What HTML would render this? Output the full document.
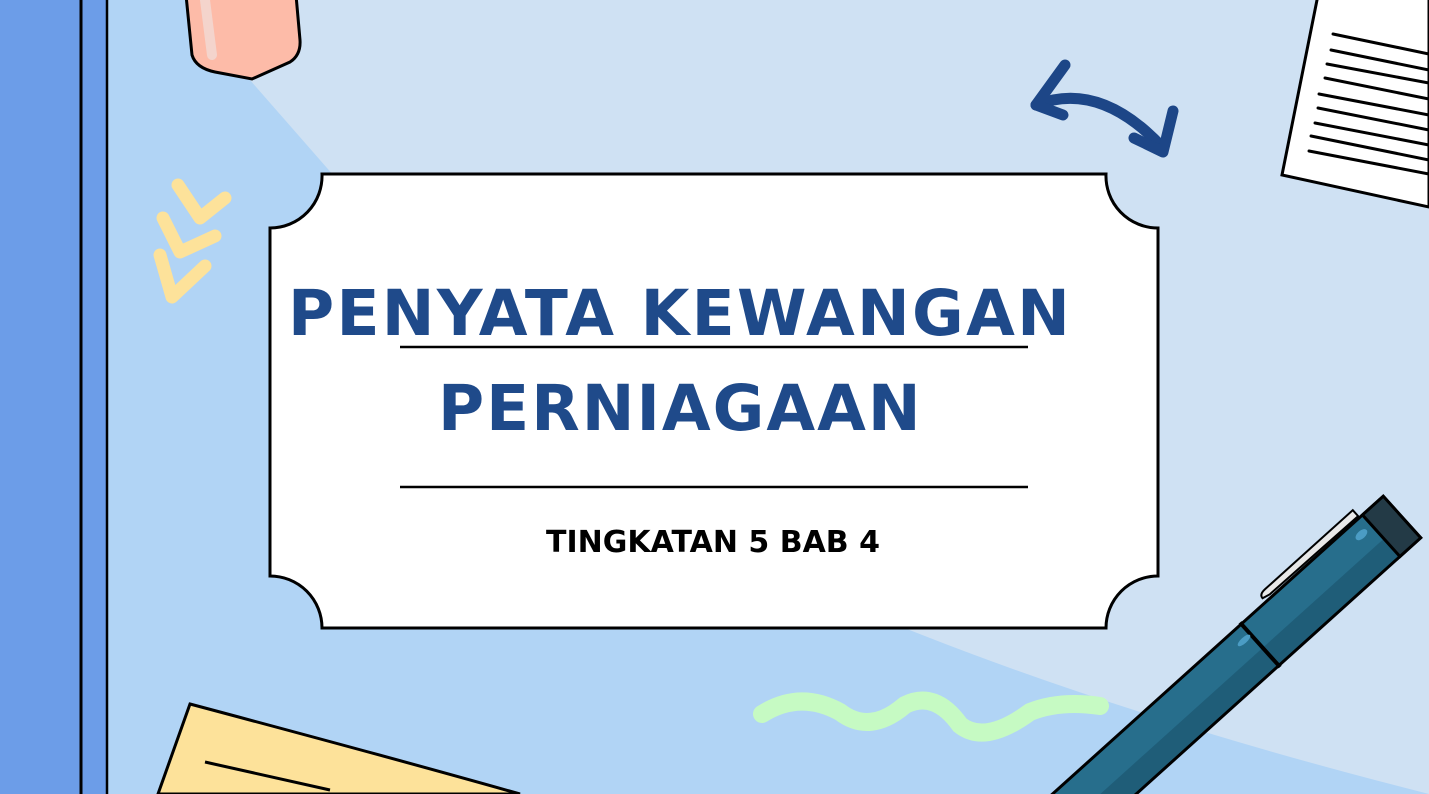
<!DOCTYPE html>
<html><head><meta charset="utf-8"><style>
html,body{margin:0;padding:0;width:1429px;height:794px;overflow:hidden;background:#B1D4F5;position:relative}
svg{position:absolute;left:0;top:0}
.t{position:absolute;font-family:"DejaVu Sans","Liberation Sans",sans-serif;font-weight:bold;color:#1F4A8A;white-space:nowrap;line-height:1}
</style></head><body>
<svg width="1429" height="794" viewBox="0 0 1429 794">
<path d="M250,0 L250,80 L600,480 Q900,660 1429,794 L1429,0 Z" fill="#CFE1F3"/>
<rect x="0" y="0" width="106" height="794" fill="#6C9DE8"/>
<line x1="81" y1="0" x2="81" y2="794" stroke="#000" stroke-width="3"/>
<line x1="107" y1="0" x2="107" y2="794" stroke="#000" stroke-width="2.5"/>
<path d="M186,-5 L192,55 Q196,68 215,72 L252,79 L290,62 Q301,55 300,40 L296,-5 Z" fill="#FDBBA8" stroke="#000" stroke-width="3"/>
<line x1="205" y1="0" x2="212" y2="55" stroke="#F4D4CC" stroke-width="10" stroke-linecap="round"/>
<g fill="none" stroke="#FDE29A" stroke-width="13" stroke-linecap="round" stroke-linejoin="round">
<path d="M178,185 L200,218 L225,198"/>
<path d="M163,218 L180,252 L215,236"/>
<path d="M160,255 L172,297 L205,266"/>
</g>
<path d="M322,174 L1106,174 A52,52 0 0 0 1158,228 L1158,576 A52,52 0 0 0 1106,628 L322,628 A52,52 0 0 0 270,576 L270,228 A52,52 0 0 0 322,174 Z" fill="#fff" stroke="#000" stroke-width="3"/>
<line x1="400" y1="347" x2="1028" y2="347" stroke="#000" stroke-width="2.5"/>
<line x1="400" y1="487" x2="1028" y2="487" stroke="#000" stroke-width="2.5"/>
<g fill="none" stroke="#1D4687" stroke-width="11" stroke-linecap="round" stroke-linejoin="round">
<path d="M1036,105 Q1100,80 1163,148"/>
<path d="M1065,65 L1036,105 L1063,115"/>
<path d="M1134,138 L1163,152 L1173,111"/>
</g>
<path d="M1318,-5 L1282,175 Q1350,190 1429,207 L1429,-5 Z" fill="#fff" stroke="#000" stroke-width="3"/>
<g stroke="#000" stroke-width="3" stroke-linecap="round">
<line x1="1333" y1="34" x2="1429" y2="54"/><line x1="1331" y1="50" x2="1429" y2="70"/>
<line x1="1327" y1="64" x2="1429" y2="83"/><line x1="1325" y1="78" x2="1429" y2="99"/>
<line x1="1319" y1="94" x2="1429" y2="115"/><line x1="1318" y1="108" x2="1429" y2="130"/>
<line x1="1315" y1="123" x2="1429" y2="145"/><line x1="1311" y1="136" x2="1429" y2="160"/>
<line x1="1309" y1="151" x2="1429" y2="174"/>
</g>
<path d="M190,704 L158,794 L520,794 Q400,760 190,704 Z" fill="#FDE29A" stroke="#000" stroke-width="3"/>
<line x1="205" y1="762" x2="330" y2="790" stroke="#000" stroke-width="3"/>
<path d="M762,714 Q800,690 840,712 Q870,735 905,705 Q935,690 960,725 Q985,745 1030,712 Q1060,700 1100,706" fill="none" stroke="#C6FAC3" stroke-width="18" stroke-linecap="round"/>
<g transform="translate(1402,517) rotate(-42)">
<rect x="-500" y="-28" width="500" height="56" fill="#276E8C"/>
<rect x="-500" y="4" width="500" height="24" fill="#1F5D78"/>
<rect x="-500" y="-28" width="500" height="56" fill="none" stroke="#000" stroke-width="3"/>
<line x1="-191" y1="-30" x2="-191" y2="30" stroke="#000" stroke-width="4"/>
<rect x="-28" y="-28" width="28" height="56" fill="#233A46" stroke="#000" stroke-width="3"/>
<path d="M-32,-30 L-32,-38 L-150,-38 Q-158,-38 -158,-33 L-150,-31 Z" fill="#E8E8E8" stroke="#000" stroke-width="2"/>
<ellipse cx="-42" cy="-14" rx="7" ry="4" fill="#4B9CC4"/>
<ellipse cx="-200" cy="-14" rx="8" ry="3" fill="#4B9CC4"/>
</g>
</svg>
<div class="t" style="left:288px;top:282px;font-size:63px;letter-spacing:2.3px;">PENYATA KEWANGAN</div>
<div class="t" style="left:438px;top:377px;font-size:63px;letter-spacing:2px;">PERNIAGAAN</div>
<div class="t" style="left:546px;top:528px;font-size:30px;color:#000;">TINGKATAN 5 BAB 4</div>
</body></html>
